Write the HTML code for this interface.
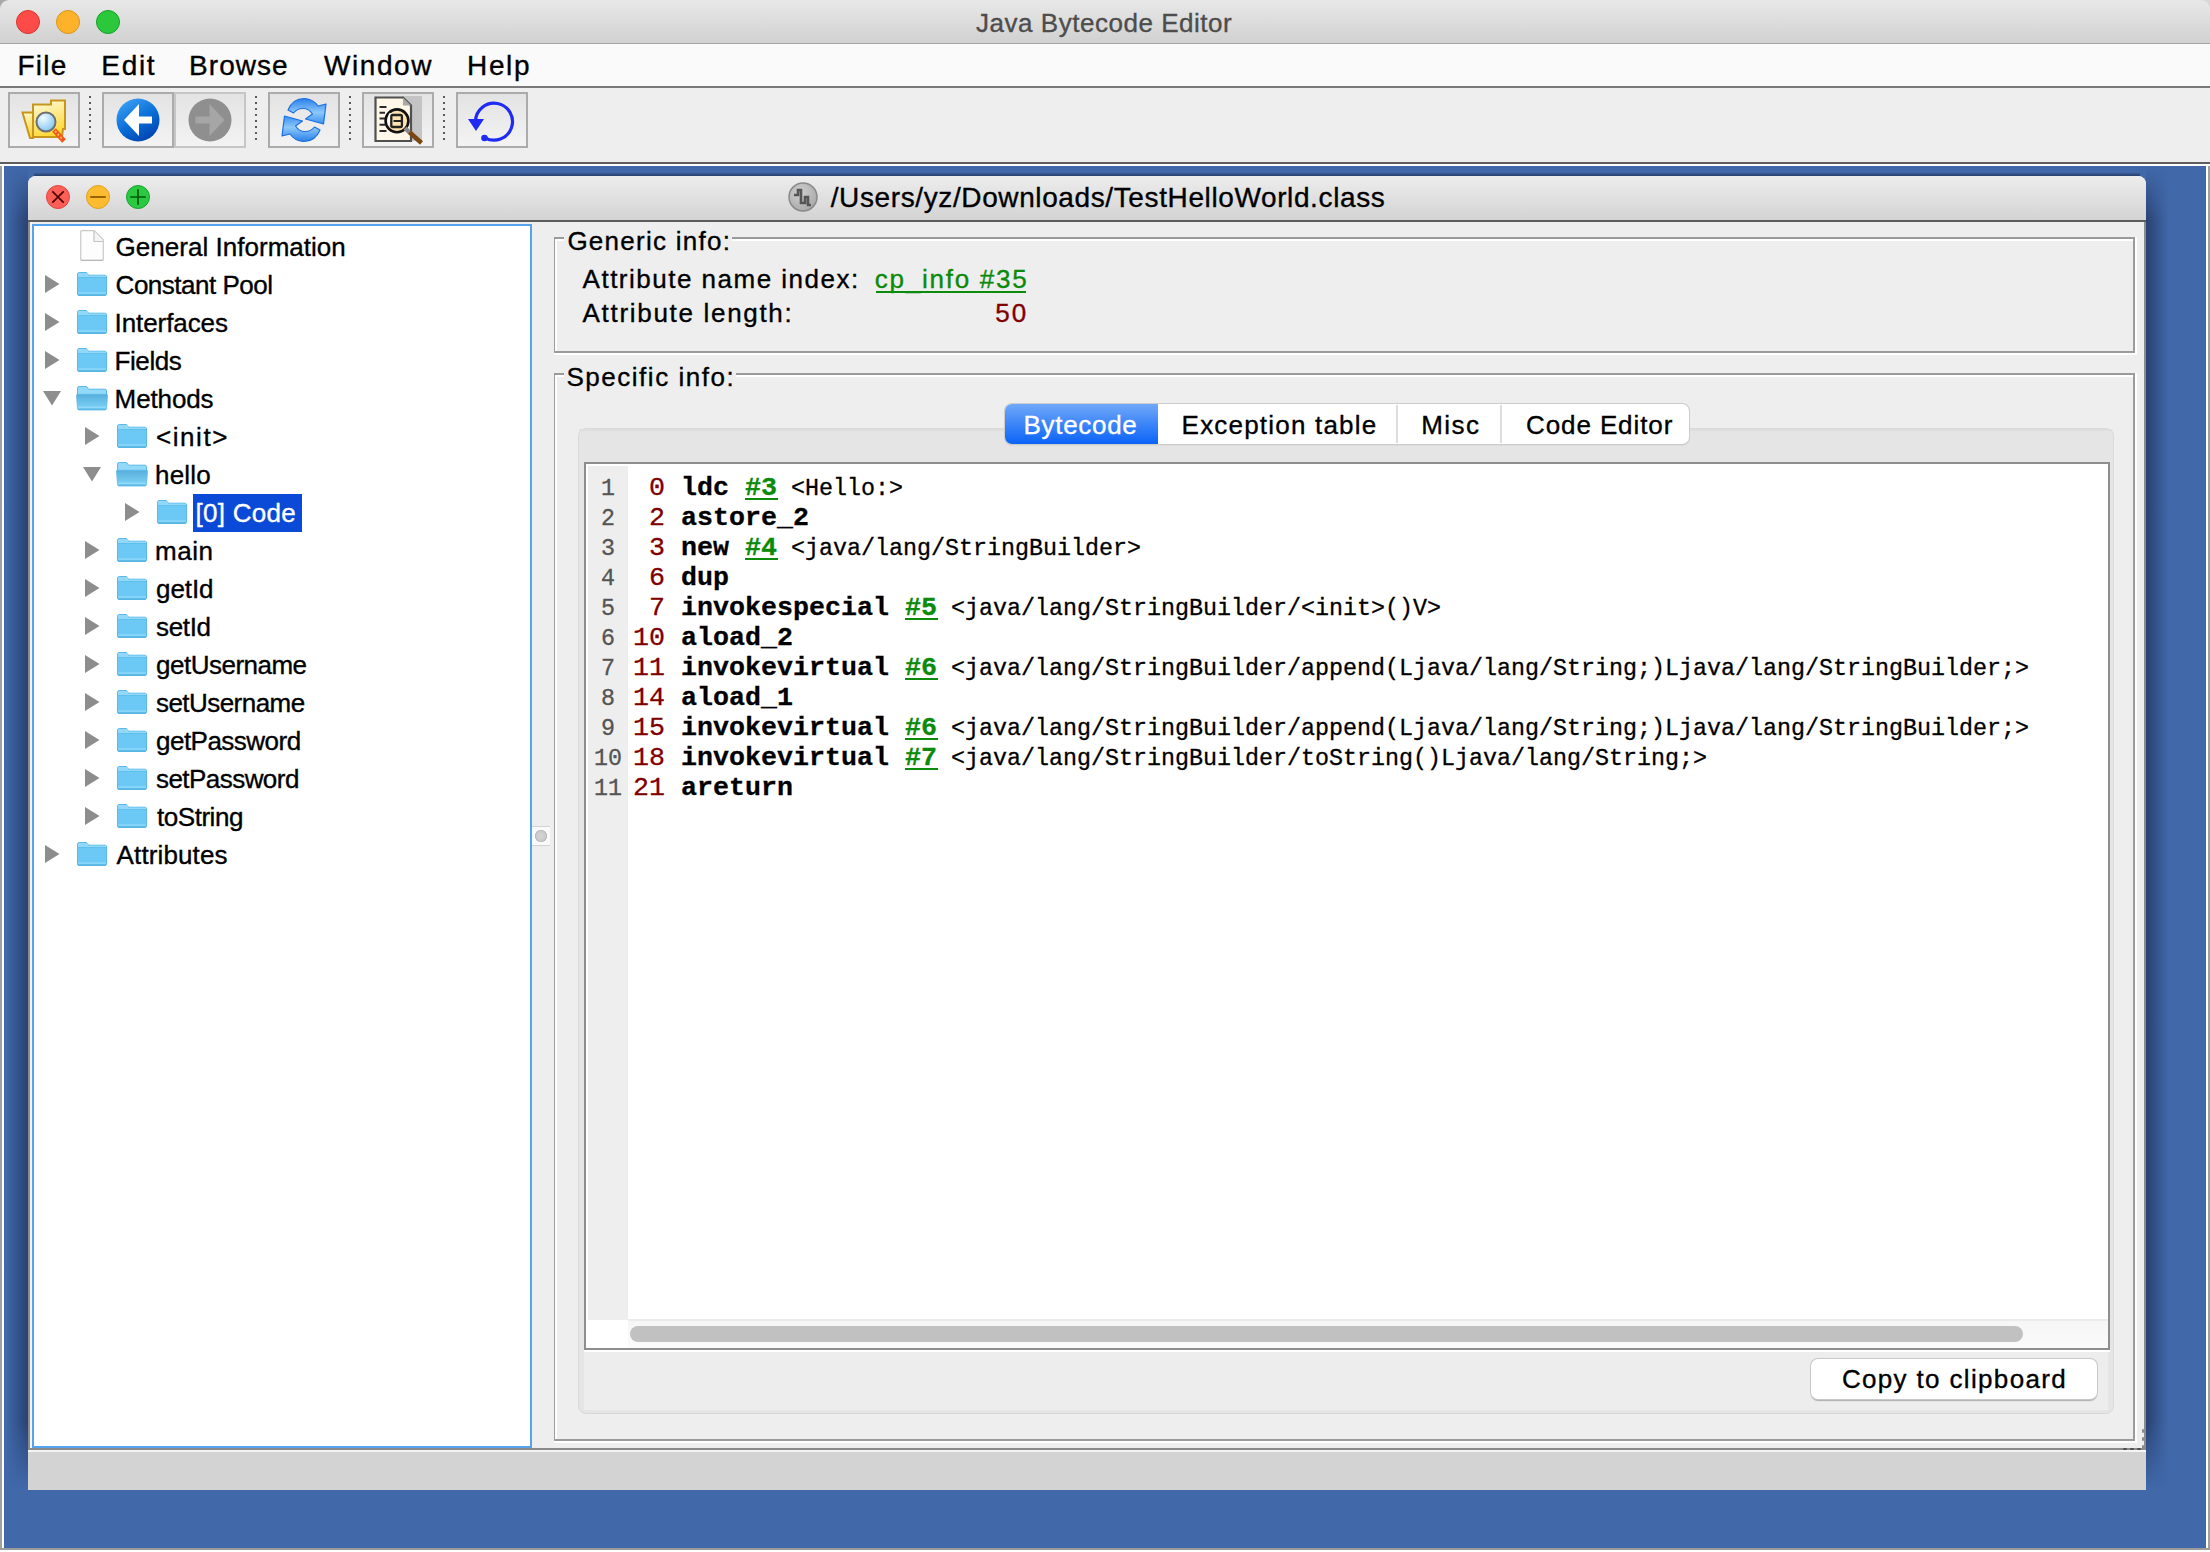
<!DOCTYPE html>
<html><head><meta charset="utf-8"><title>Java Bytecode Editor</title>
<style>
html,body{margin:0;padding:0;width:2210px;height:1552px;overflow:hidden;background:#eeeeee}
.b{position:absolute;box-sizing:border-box}
.t{position:absolute;line-height:1;white-space:pre}
.s{font-family:"Liberation Sans", sans-serif;-webkit-text-stroke:0.35px currentColor}
.m{font-family:"Liberation Mono", monospace;-webkit-text-stroke:0.3px currentColor}
svg{position:absolute;overflow:visible}
</style></head><body>
<div class="b" style="left:0px;top:0px;width:2210px;height:1552px;background:#ececec"></div>
<div class="b" style="left:0px;top:0px;width:10px;height:10px;background:#a9a9a9"></div>
<div class="b" style="left:2200px;top:0px;width:10px;height:10px;background:#d8d8d8"></div>
<div class="b" style="left:0px;top:0px;width:2210px;height:44px;background:linear-gradient(#e8e8e8,#d1d1d1);border-radius:9px 9px 0 0;border-bottom:1px solid #a3a3a3"></div>
<div class="b" style="left:16px;top:10px;width:24px;height:24px;border-radius:50%;background:#fd4b48;border:1px solid #d9352f"></div>
<div class="b" style="left:56px;top:10px;width:24px;height:24px;border-radius:50%;background:#fdb22a;border:1px solid #d9961b"></div>
<div class="b" style="left:96px;top:10px;width:24px;height:24px;border-radius:50%;background:#2ac83a;border:1px solid #17a02a"></div>
<div class="b" style="left:0px;top:44px;width:2210px;height:44px;background:#fafafa;border-bottom:2px solid #787878"></div>
<div class="b" style="left:0px;top:88px;width:2210px;height:74px;background:#eeeeee"></div>
<div class="b" style="left:0px;top:162px;width:2210px;height:2px;background:#5e5e5e"></div>
<div class="b" style="left:0px;top:164px;width:2210px;height:2px;background:#ffffff"></div>
<div class="b" style="left:8px;top:92px;width:72px;height:56px;border:2px solid #ababab;background:linear-gradient(#e3e3e3,#f3f3f3)"></div>
<div class="b" style="left:102px;top:92px;width:72px;height:56px;border:2px solid #ababab;background:linear-gradient(#e3e3e3,#f3f3f3)"></div>
<div class="b" style="left:174px;top:92px;width:72px;height:56px;border:2px solid #c6c6c6;background:linear-gradient(#e3e3e3,#f3f3f3)"></div>
<div class="b" style="left:268px;top:92px;width:72px;height:56px;border:2px solid #ababab;background:linear-gradient(#e3e3e3,#f3f3f3)"></div>
<div class="b" style="left:362px;top:92px;width:72px;height:56px;border:2px solid #ababab;background:linear-gradient(#e3e3e3,#f3f3f3)"></div>
<div class="b" style="left:456px;top:92px;width:72px;height:56px;border:2px solid #ababab;background:linear-gradient(#e3e3e3,#f3f3f3)"></div>
<div class="b" style="left:89px;top:96px;width:2px;height:2px;background:#5a5a5a"></div>
<div class="b" style="left:89px;top:102px;width:2px;height:2px;background:#5a5a5a"></div>
<div class="b" style="left:89px;top:108px;width:2px;height:2px;background:#5a5a5a"></div>
<div class="b" style="left:89px;top:114px;width:2px;height:2px;background:#5a5a5a"></div>
<div class="b" style="left:89px;top:120px;width:2px;height:2px;background:#5a5a5a"></div>
<div class="b" style="left:89px;top:126px;width:2px;height:2px;background:#5a5a5a"></div>
<div class="b" style="left:89px;top:132px;width:2px;height:2px;background:#5a5a5a"></div>
<div class="b" style="left:89px;top:138px;width:2px;height:2px;background:#5a5a5a"></div>
<div class="b" style="left:255px;top:96px;width:2px;height:2px;background:#5a5a5a"></div>
<div class="b" style="left:255px;top:102px;width:2px;height:2px;background:#5a5a5a"></div>
<div class="b" style="left:255px;top:108px;width:2px;height:2px;background:#5a5a5a"></div>
<div class="b" style="left:255px;top:114px;width:2px;height:2px;background:#5a5a5a"></div>
<div class="b" style="left:255px;top:120px;width:2px;height:2px;background:#5a5a5a"></div>
<div class="b" style="left:255px;top:126px;width:2px;height:2px;background:#5a5a5a"></div>
<div class="b" style="left:255px;top:132px;width:2px;height:2px;background:#5a5a5a"></div>
<div class="b" style="left:255px;top:138px;width:2px;height:2px;background:#5a5a5a"></div>
<div class="b" style="left:349px;top:96px;width:2px;height:2px;background:#5a5a5a"></div>
<div class="b" style="left:349px;top:102px;width:2px;height:2px;background:#5a5a5a"></div>
<div class="b" style="left:349px;top:108px;width:2px;height:2px;background:#5a5a5a"></div>
<div class="b" style="left:349px;top:114px;width:2px;height:2px;background:#5a5a5a"></div>
<div class="b" style="left:349px;top:120px;width:2px;height:2px;background:#5a5a5a"></div>
<div class="b" style="left:349px;top:126px;width:2px;height:2px;background:#5a5a5a"></div>
<div class="b" style="left:349px;top:132px;width:2px;height:2px;background:#5a5a5a"></div>
<div class="b" style="left:349px;top:138px;width:2px;height:2px;background:#5a5a5a"></div>
<div class="b" style="left:443px;top:96px;width:2px;height:2px;background:#5a5a5a"></div>
<div class="b" style="left:443px;top:102px;width:2px;height:2px;background:#5a5a5a"></div>
<div class="b" style="left:443px;top:108px;width:2px;height:2px;background:#5a5a5a"></div>
<div class="b" style="left:443px;top:114px;width:2px;height:2px;background:#5a5a5a"></div>
<div class="b" style="left:443px;top:120px;width:2px;height:2px;background:#5a5a5a"></div>
<div class="b" style="left:443px;top:126px;width:2px;height:2px;background:#5a5a5a"></div>
<div class="b" style="left:443px;top:132px;width:2px;height:2px;background:#5a5a5a"></div>
<div class="b" style="left:443px;top:138px;width:2px;height:2px;background:#5a5a5a"></div>
<div class="b" style="left:0px;top:166px;width:2210px;height:1386px;background:#ffffff"></div>
<div class="b" style="left:0px;top:166px;width:2px;height:1384px;background:#a0a0a0"></div>
<div class="b" style="left:2208px;top:166px;width:2px;height:1384px;background:#a0a0a0"></div>
<div class="b" style="left:4px;top:166px;width:2202px;height:1382px;background:#4168a9"></div>
<div class="b" style="left:0px;top:1548px;width:2210px;height:2px;background:#9c9c9c"></div>
<div class="b" style="left:6px;top:168px;width:22px;height:1320px;background:linear-gradient(to right,rgba(30,50,90,0),rgba(25,42,80,.62));-webkit-mask-image:linear-gradient(transparent,#000 4%,#000 95%,transparent)"></div>
<div class="b" style="left:2146px;top:168px;width:22px;height:1320px;background:linear-gradient(to left,rgba(30,50,90,0),rgba(25,42,80,.62));-webkit-mask-image:linear-gradient(transparent,#000 4%,#000 95%,transparent)"></div>
<div class="b" style="left:34px;top:173px;width:2106px;height:3px;background:linear-gradient(rgba(30,45,80,.2),rgba(30,45,80,.7))"></div>
<div class="b" style="left:28px;top:176px;width:2118px;height:1314px;background:#eeeeee;border-radius:8px 8px 0 0"></div>
<div class="b" style="left:28px;top:176px;width:2118px;height:46px;background:linear-gradient(#ededed,#d2d2d2);border-radius:8px 8px 0 0"></div>
<div class="b" style="left:28px;top:220px;width:2118px;height:2px;background:#5c5c5c"></div>
<div class="b" style="left:28px;top:222px;width:2px;height:1228px;background:#8c8c8c"></div>
<div class="b" style="left:2144px;top:222px;width:2px;height:1228px;background:#8c8c8c"></div>
<div class="b" style="left:46px;top:185px;width:24px;height:24px;border-radius:50%;background:#fd5f56;border:1px solid #df463f"></div>
<div class="b" style="left:86px;top:185px;width:24px;height:24px;border-radius:50%;background:#fdbc2f;border:1px solid #dea124"></div>
<div class="b" style="left:126px;top:185px;width:24px;height:24px;border-radius:50%;background:#2ac940;border:1px solid #1aa52d"></div>
<svg style="left:46px;top:185px" width="24" height="24" viewBox="0 0 24 24"><path d="M6.3 6.3L17.7 17.7M17.7 6.3L6.3 17.7" stroke="#4d0000" stroke-width="1.7"/></svg>
<svg style="left:86px;top:185px" width="24" height="24" viewBox="0 0 24 24"><path d="M4.2 12H19.8" stroke="#8a5200" stroke-width="1.7"/></svg>
<svg style="left:126px;top:185px" width="24" height="24" viewBox="0 0 24 24"><path d="M4.2 12H19.8M12 4.2V19.8" stroke="#005a0a" stroke-width="1.7"/></svg>
<svg style="left:788px;top:182px" width="30" height="30" viewBox="0 0 30 30"><defs><radialGradient id="ti" cx="40%" cy="35%" r="70%"><stop offset="0" stop-color="#d0d0d0"/><stop offset="1" stop-color="#a8a8a8"/></radialGradient></defs><circle cx="15" cy="15" r="14" fill="url(#ti)" stroke="#8a8a8a" stroke-width="1.5"/><path d="M6 13h4v-5h3v13h4v-6h3v8h3" fill="none" stroke="#555" stroke-width="2.6"/></svg>
<div class="b" style="left:28px;top:1448px;width:2118px;height:2px;background:#8a8a8a"></div>
<div class="b" style="left:28px;top:1450px;width:2118px;height:2px;background:#f4f4f4"></div>
<div class="b" style="left:28px;top:1452px;width:2118px;height:38px;background:#d3d3d3"></div>
<div class="b" style="left:30px;top:222px;width:2px;height:1226px;background:#f8f4f0"></div>
<div class="b" style="left:32px;top:224px;width:500px;height:1224px;background:#fff;border:2px solid #56a4ee"></div>
<svg style="left:80px;top:230px" width="24" height="31" viewBox="0 0 24 31"><path d="M0.7 1.7Q0.7 0.7 1.7 0.7H14.2L23.3 9.8V29.3Q23.3 30.3 22.3 30.3H1.7Q0.7 30.3 0.7 29.3Z" fill="#fdfdfd" stroke="#c9c9c9" stroke-width="1.2"/><path d="M14 1V11.5H22.8" fill="#f4f4f4" stroke="#c4c4c4" stroke-width="1.2"/><path d="M1 30.3H23" stroke="#b5b5b5" stroke-width="1"/></svg>
<svg style="left:45px;top:275px" width="15" height="18" viewBox="0 0 15 18"><path d="M0 0L14.5 9L0 18Z" fill="#8d8d8d"/></svg>
<svg style="left:77px;top:272px" width="30" height="24" viewBox="0 0 30 24"><path d="M0.5 2.2Q0.5 0.5 2.2 0.5H9.6L11.6 3.2H27.8Q29.5 3.2 29.5 5V22.2Q29.5 23.5 28 23.5H2Q0.5 23.5 0.5 22.2Z" fill="#6cc9f5" stroke="#5ab9e8" stroke-width="1"/><rect x="1" y="1" width="10" height="4" fill="#93d8f8"/><rect x="1" y="3.6" width="28" height="1.6" fill="#93d8f8"/><rect x="1" y="5.2" width="28" height="0.8" fill="#5bbde9"/><rect x="1" y="20.3" width="28" height="1.5" fill="#8ed8f9"/><rect x="1.5" y="22.3" width="27" height="1.2" fill="#58b3e0"/></svg>
<svg style="left:45px;top:313px" width="15" height="18" viewBox="0 0 15 18"><path d="M0 0L14.5 9L0 18Z" fill="#8d8d8d"/></svg>
<svg style="left:77px;top:310px" width="30" height="24" viewBox="0 0 30 24"><path d="M0.5 2.2Q0.5 0.5 2.2 0.5H9.6L11.6 3.2H27.8Q29.5 3.2 29.5 5V22.2Q29.5 23.5 28 23.5H2Q0.5 23.5 0.5 22.2Z" fill="#6cc9f5" stroke="#5ab9e8" stroke-width="1"/><rect x="1" y="1" width="10" height="4" fill="#93d8f8"/><rect x="1" y="3.6" width="28" height="1.6" fill="#93d8f8"/><rect x="1" y="5.2" width="28" height="0.8" fill="#5bbde9"/><rect x="1" y="20.3" width="28" height="1.5" fill="#8ed8f9"/><rect x="1.5" y="22.3" width="27" height="1.2" fill="#58b3e0"/></svg>
<svg style="left:45px;top:351px" width="15" height="18" viewBox="0 0 15 18"><path d="M0 0L14.5 9L0 18Z" fill="#8d8d8d"/></svg>
<svg style="left:77px;top:348px" width="30" height="24" viewBox="0 0 30 24"><path d="M0.5 2.2Q0.5 0.5 2.2 0.5H9.6L11.6 3.2H27.8Q29.5 3.2 29.5 5V22.2Q29.5 23.5 28 23.5H2Q0.5 23.5 0.5 22.2Z" fill="#6cc9f5" stroke="#5ab9e8" stroke-width="1"/><rect x="1" y="1" width="10" height="4" fill="#93d8f8"/><rect x="1" y="3.6" width="28" height="1.6" fill="#93d8f8"/><rect x="1" y="5.2" width="28" height="0.8" fill="#5bbde9"/><rect x="1" y="20.3" width="28" height="1.5" fill="#8ed8f9"/><rect x="1.5" y="22.3" width="27" height="1.2" fill="#58b3e0"/></svg>
<svg style="left:43px;top:391px" width="18" height="15" viewBox="0 0 18 15"><path d="M0 0H18L9 14.5Z" fill="#8d8d8d"/></svg>
<svg style="left:76px;top:386px" width="32" height="25" viewBox="0 0 32 25"><path d="M1.5 2.2Q1.5 0.5 3.2 0.5H10.6L12.6 3.2H28.8Q30.5 3.2 30.5 5V10H1.5Z" fill="#93d9f9" stroke="#5ab9e8" stroke-width="1"/><path d="M0.5 9Q0.5 8.3 1.5 8.3H30.5Q31.5 8.3 31.5 9L30.5 22.5Q30.5 24 29 24H3Q1.5 24 1.5 22.5Z" fill="url(#fo)" stroke="#5ab9e8" stroke-width="0.8"/><defs><linearGradient id="fo" x1="0" y1="0" x2="0" y2="1"><stop offset="0" stop-color="#58afdc"/><stop offset="1" stop-color="#80d5f9"/></linearGradient></defs><rect x="2" y="20.5" width="28" height="1.5" fill="#90d9fa"/><rect x="2.5" y="22.6" width="27" height="1.2" fill="#58b3e0"/></svg>
<svg style="left:85px;top:427px" width="15" height="18" viewBox="0 0 15 18"><path d="M0 0L14.5 9L0 18Z" fill="#8d8d8d"/></svg>
<svg style="left:117px;top:424px" width="30" height="24" viewBox="0 0 30 24"><path d="M0.5 2.2Q0.5 0.5 2.2 0.5H9.6L11.6 3.2H27.8Q29.5 3.2 29.5 5V22.2Q29.5 23.5 28 23.5H2Q0.5 23.5 0.5 22.2Z" fill="#6cc9f5" stroke="#5ab9e8" stroke-width="1"/><rect x="1" y="1" width="10" height="4" fill="#93d8f8"/><rect x="1" y="3.6" width="28" height="1.6" fill="#93d8f8"/><rect x="1" y="5.2" width="28" height="0.8" fill="#5bbde9"/><rect x="1" y="20.3" width="28" height="1.5" fill="#8ed8f9"/><rect x="1.5" y="22.3" width="27" height="1.2" fill="#58b3e0"/></svg>
<svg style="left:83px;top:467px" width="18" height="15" viewBox="0 0 18 15"><path d="M0 0H18L9 14.5Z" fill="#8d8d8d"/></svg>
<svg style="left:116px;top:462px" width="32" height="25" viewBox="0 0 32 25"><path d="M1.5 2.2Q1.5 0.5 3.2 0.5H10.6L12.6 3.2H28.8Q30.5 3.2 30.5 5V10H1.5Z" fill="#93d9f9" stroke="#5ab9e8" stroke-width="1"/><path d="M0.5 9Q0.5 8.3 1.5 8.3H30.5Q31.5 8.3 31.5 9L30.5 22.5Q30.5 24 29 24H3Q1.5 24 1.5 22.5Z" fill="url(#fo)" stroke="#5ab9e8" stroke-width="0.8"/><defs><linearGradient id="fo" x1="0" y1="0" x2="0" y2="1"><stop offset="0" stop-color="#58afdc"/><stop offset="1" stop-color="#80d5f9"/></linearGradient></defs><rect x="2" y="20.5" width="28" height="1.5" fill="#90d9fa"/><rect x="2.5" y="22.6" width="27" height="1.2" fill="#58b3e0"/></svg>
<svg style="left:125px;top:503px" width="15" height="18" viewBox="0 0 15 18"><path d="M0 0L14.5 9L0 18Z" fill="#8d8d8d"/></svg>
<svg style="left:157px;top:500px" width="30" height="24" viewBox="0 0 30 24"><path d="M0.5 2.2Q0.5 0.5 2.2 0.5H9.6L11.6 3.2H27.8Q29.5 3.2 29.5 5V22.2Q29.5 23.5 28 23.5H2Q0.5 23.5 0.5 22.2Z" fill="#6cc9f5" stroke="#5ab9e8" stroke-width="1"/><rect x="1" y="1" width="10" height="4" fill="#93d8f8"/><rect x="1" y="3.6" width="28" height="1.6" fill="#93d8f8"/><rect x="1" y="5.2" width="28" height="0.8" fill="#5bbde9"/><rect x="1" y="20.3" width="28" height="1.5" fill="#8ed8f9"/><rect x="1.5" y="22.3" width="27" height="1.2" fill="#58b3e0"/></svg>
<div class="b" style="left:193px;top:494px;width:109px;height:38px;background:#0b4ad6"></div>
<svg style="left:85px;top:541px" width="15" height="18" viewBox="0 0 15 18"><path d="M0 0L14.5 9L0 18Z" fill="#8d8d8d"/></svg>
<svg style="left:117px;top:538px" width="30" height="24" viewBox="0 0 30 24"><path d="M0.5 2.2Q0.5 0.5 2.2 0.5H9.6L11.6 3.2H27.8Q29.5 3.2 29.5 5V22.2Q29.5 23.5 28 23.5H2Q0.5 23.5 0.5 22.2Z" fill="#6cc9f5" stroke="#5ab9e8" stroke-width="1"/><rect x="1" y="1" width="10" height="4" fill="#93d8f8"/><rect x="1" y="3.6" width="28" height="1.6" fill="#93d8f8"/><rect x="1" y="5.2" width="28" height="0.8" fill="#5bbde9"/><rect x="1" y="20.3" width="28" height="1.5" fill="#8ed8f9"/><rect x="1.5" y="22.3" width="27" height="1.2" fill="#58b3e0"/></svg>
<svg style="left:85px;top:579px" width="15" height="18" viewBox="0 0 15 18"><path d="M0 0L14.5 9L0 18Z" fill="#8d8d8d"/></svg>
<svg style="left:117px;top:576px" width="30" height="24" viewBox="0 0 30 24"><path d="M0.5 2.2Q0.5 0.5 2.2 0.5H9.6L11.6 3.2H27.8Q29.5 3.2 29.5 5V22.2Q29.5 23.5 28 23.5H2Q0.5 23.5 0.5 22.2Z" fill="#6cc9f5" stroke="#5ab9e8" stroke-width="1"/><rect x="1" y="1" width="10" height="4" fill="#93d8f8"/><rect x="1" y="3.6" width="28" height="1.6" fill="#93d8f8"/><rect x="1" y="5.2" width="28" height="0.8" fill="#5bbde9"/><rect x="1" y="20.3" width="28" height="1.5" fill="#8ed8f9"/><rect x="1.5" y="22.3" width="27" height="1.2" fill="#58b3e0"/></svg>
<svg style="left:85px;top:617px" width="15" height="18" viewBox="0 0 15 18"><path d="M0 0L14.5 9L0 18Z" fill="#8d8d8d"/></svg>
<svg style="left:117px;top:614px" width="30" height="24" viewBox="0 0 30 24"><path d="M0.5 2.2Q0.5 0.5 2.2 0.5H9.6L11.6 3.2H27.8Q29.5 3.2 29.5 5V22.2Q29.5 23.5 28 23.5H2Q0.5 23.5 0.5 22.2Z" fill="#6cc9f5" stroke="#5ab9e8" stroke-width="1"/><rect x="1" y="1" width="10" height="4" fill="#93d8f8"/><rect x="1" y="3.6" width="28" height="1.6" fill="#93d8f8"/><rect x="1" y="5.2" width="28" height="0.8" fill="#5bbde9"/><rect x="1" y="20.3" width="28" height="1.5" fill="#8ed8f9"/><rect x="1.5" y="22.3" width="27" height="1.2" fill="#58b3e0"/></svg>
<svg style="left:85px;top:655px" width="15" height="18" viewBox="0 0 15 18"><path d="M0 0L14.5 9L0 18Z" fill="#8d8d8d"/></svg>
<svg style="left:117px;top:652px" width="30" height="24" viewBox="0 0 30 24"><path d="M0.5 2.2Q0.5 0.5 2.2 0.5H9.6L11.6 3.2H27.8Q29.5 3.2 29.5 5V22.2Q29.5 23.5 28 23.5H2Q0.5 23.5 0.5 22.2Z" fill="#6cc9f5" stroke="#5ab9e8" stroke-width="1"/><rect x="1" y="1" width="10" height="4" fill="#93d8f8"/><rect x="1" y="3.6" width="28" height="1.6" fill="#93d8f8"/><rect x="1" y="5.2" width="28" height="0.8" fill="#5bbde9"/><rect x="1" y="20.3" width="28" height="1.5" fill="#8ed8f9"/><rect x="1.5" y="22.3" width="27" height="1.2" fill="#58b3e0"/></svg>
<svg style="left:85px;top:693px" width="15" height="18" viewBox="0 0 15 18"><path d="M0 0L14.5 9L0 18Z" fill="#8d8d8d"/></svg>
<svg style="left:117px;top:690px" width="30" height="24" viewBox="0 0 30 24"><path d="M0.5 2.2Q0.5 0.5 2.2 0.5H9.6L11.6 3.2H27.8Q29.5 3.2 29.5 5V22.2Q29.5 23.5 28 23.5H2Q0.5 23.5 0.5 22.2Z" fill="#6cc9f5" stroke="#5ab9e8" stroke-width="1"/><rect x="1" y="1" width="10" height="4" fill="#93d8f8"/><rect x="1" y="3.6" width="28" height="1.6" fill="#93d8f8"/><rect x="1" y="5.2" width="28" height="0.8" fill="#5bbde9"/><rect x="1" y="20.3" width="28" height="1.5" fill="#8ed8f9"/><rect x="1.5" y="22.3" width="27" height="1.2" fill="#58b3e0"/></svg>
<svg style="left:85px;top:731px" width="15" height="18" viewBox="0 0 15 18"><path d="M0 0L14.5 9L0 18Z" fill="#8d8d8d"/></svg>
<svg style="left:117px;top:728px" width="30" height="24" viewBox="0 0 30 24"><path d="M0.5 2.2Q0.5 0.5 2.2 0.5H9.6L11.6 3.2H27.8Q29.5 3.2 29.5 5V22.2Q29.5 23.5 28 23.5H2Q0.5 23.5 0.5 22.2Z" fill="#6cc9f5" stroke="#5ab9e8" stroke-width="1"/><rect x="1" y="1" width="10" height="4" fill="#93d8f8"/><rect x="1" y="3.6" width="28" height="1.6" fill="#93d8f8"/><rect x="1" y="5.2" width="28" height="0.8" fill="#5bbde9"/><rect x="1" y="20.3" width="28" height="1.5" fill="#8ed8f9"/><rect x="1.5" y="22.3" width="27" height="1.2" fill="#58b3e0"/></svg>
<svg style="left:85px;top:769px" width="15" height="18" viewBox="0 0 15 18"><path d="M0 0L14.5 9L0 18Z" fill="#8d8d8d"/></svg>
<svg style="left:117px;top:766px" width="30" height="24" viewBox="0 0 30 24"><path d="M0.5 2.2Q0.5 0.5 2.2 0.5H9.6L11.6 3.2H27.8Q29.5 3.2 29.5 5V22.2Q29.5 23.5 28 23.5H2Q0.5 23.5 0.5 22.2Z" fill="#6cc9f5" stroke="#5ab9e8" stroke-width="1"/><rect x="1" y="1" width="10" height="4" fill="#93d8f8"/><rect x="1" y="3.6" width="28" height="1.6" fill="#93d8f8"/><rect x="1" y="5.2" width="28" height="0.8" fill="#5bbde9"/><rect x="1" y="20.3" width="28" height="1.5" fill="#8ed8f9"/><rect x="1.5" y="22.3" width="27" height="1.2" fill="#58b3e0"/></svg>
<svg style="left:85px;top:807px" width="15" height="18" viewBox="0 0 15 18"><path d="M0 0L14.5 9L0 18Z" fill="#8d8d8d"/></svg>
<svg style="left:117px;top:804px" width="30" height="24" viewBox="0 0 30 24"><path d="M0.5 2.2Q0.5 0.5 2.2 0.5H9.6L11.6 3.2H27.8Q29.5 3.2 29.5 5V22.2Q29.5 23.5 28 23.5H2Q0.5 23.5 0.5 22.2Z" fill="#6cc9f5" stroke="#5ab9e8" stroke-width="1"/><rect x="1" y="1" width="10" height="4" fill="#93d8f8"/><rect x="1" y="3.6" width="28" height="1.6" fill="#93d8f8"/><rect x="1" y="5.2" width="28" height="0.8" fill="#5bbde9"/><rect x="1" y="20.3" width="28" height="1.5" fill="#8ed8f9"/><rect x="1.5" y="22.3" width="27" height="1.2" fill="#58b3e0"/></svg>
<svg style="left:45px;top:845px" width="15" height="18" viewBox="0 0 15 18"><path d="M0 0L14.5 9L0 18Z" fill="#8d8d8d"/></svg>
<svg style="left:77px;top:842px" width="30" height="24" viewBox="0 0 30 24"><path d="M0.5 2.2Q0.5 0.5 2.2 0.5H9.6L11.6 3.2H27.8Q29.5 3.2 29.5 5V22.2Q29.5 23.5 28 23.5H2Q0.5 23.5 0.5 22.2Z" fill="#6cc9f5" stroke="#5ab9e8" stroke-width="1"/><rect x="1" y="1" width="10" height="4" fill="#93d8f8"/><rect x="1" y="3.6" width="28" height="1.6" fill="#93d8f8"/><rect x="1" y="5.2" width="28" height="0.8" fill="#5bbde9"/><rect x="1" y="20.3" width="28" height="1.5" fill="#8ed8f9"/><rect x="1.5" y="22.3" width="27" height="1.2" fill="#58b3e0"/></svg>
<div class="b" style="left:554px;top:237px;width:1581px;height:116px;border-left:1px solid #9b9b9b;border-top:2px solid #9b9b9b;border-right:2px solid #9b9b9b;border-bottom:2px solid #9b9b9b"></div>
<div class="b" style="left:555px;top:239px;width:1578px;height:112px;border-left:2px solid #fff;border-top:2px solid #fff"></div>
<div class="b" style="left:554px;top:353px;width:1583px;height:2px;background:#fff"></div>
<div class="b" style="left:2135px;top:237px;width:2px;height:118px;background:#fff"></div>
<div class="b" style="left:564px;top:226px;width:168px;height:24px;background:#eeeeee"></div>
<div class="b" style="left:876px;top:291px;width:150px;height:2px;background:#0b8a0b"></div>
<div class="b" style="left:554px;top:373px;width:1581px;height:1068px;border-left:1px solid #9b9b9b;border-top:2px solid #9b9b9b;border-right:2px solid #9b9b9b;border-bottom:2px solid #9b9b9b"></div>
<div class="b" style="left:555px;top:375px;width:1578px;height:1064px;border-left:2px solid #fff;border-top:2px solid #fff"></div>
<div class="b" style="left:554px;top:1441px;width:1583px;height:2px;background:#fff"></div>
<div class="b" style="left:2135px;top:373px;width:2px;height:1070px;background:#fff"></div>
<div class="b" style="left:564px;top:362px;width:172px;height:24px;background:#eeeeee"></div>
<div class="b" style="left:578px;top:428px;width:1536px;height:986px;background:#e5e5e5;border:1px solid #d9d9d9;border-radius:8px"></div>
<div class="b" style="left:579px;top:429px;width:1534px;height:2px;background:#dedede;border-radius:8px 8px 0 0"></div>
<div class="b" style="left:1005px;top:404px;width:684px;height:40px;background:#fff;border-radius:7px;box-shadow:0 0 0 1px #cdcdcd, 0 1px 1.5px #b8b8b8"></div>
<div class="b" style="left:1005px;top:404px;width:153px;height:40px;background:linear-gradient(#70a8f9,#0a63f7);border-radius:7px 0 0 7px"></div>
<div class="b" style="left:1396px;top:405px;width:2px;height:38px;background:#dddddd"></div>
<div class="b" style="left:1500px;top:405px;width:2px;height:38px;background:#dddddd"></div>
<div class="b" style="left:584px;top:462px;width:1524px;height:948px;background:#ededed"></div>
<div class="b" style="left:584px;top:1350px;width:1526px;height:2px;background:#ffffff"></div>
<div class="b" style="left:584px;top:462px;width:1526px;height:888px;background:#fff;border:2px solid #8e8e8e"></div>
<div class="b" style="left:588px;top:466px;width:40px;height:854px;background:#eeeeee"></div>
<div class="b" style="left:628px;top:1319px;width:1480px;height:2px;background:#ececec"></div>
<div class="b" style="left:628px;top:1321px;width:1480px;height:27px;background:linear-gradient(#f6f6f6,#fbfbfb)"></div>
<div class="b" style="left:630px;top:1326px;width:1393px;height:16px;background:#c1c1c1;border-radius:8px"></div>
<div class="b" style="left:1811px;top:1359px;width:286px;height:40px;background:#fff;border-radius:7px;box-shadow:0 0 0 1px #c8c8c8, 0 1.5px 1px #adadad"></div>
<div class="t m" style="left:601.00px;top:477.97px;font-size:23.33px;color:#555555;">1</div>
<div class="t m" style="left:649.00px;top:475.43px;font-size:26.67px;color:#800000;">0</div>
<div class="t m" style="left:681.00px;top:475.43px;font-size:26.67px;font-weight:700;">ldc</div>
<div class="t m" style="left:745.00px;top:475.43px;font-size:26.67px;color:#0b8a0b;font-weight:700;">#3</div>
<div class="b" style="left:745px;top:498px;width:33px;height:2px;background:#0b8a0b"></div>
<div class="t m" style="left:791.00px;top:477.97px;font-size:23.33px;">&lt;Hello:&gt;</div>
<div class="t m" style="left:601.00px;top:507.97px;font-size:23.33px;color:#555555;">2</div>
<div class="t m" style="left:649.00px;top:505.43px;font-size:26.67px;color:#800000;">2</div>
<div class="t m" style="left:681.00px;top:505.43px;font-size:26.67px;font-weight:700;">astore_2</div>
<div class="t m" style="left:601.00px;top:537.97px;font-size:23.33px;color:#555555;">3</div>
<div class="t m" style="left:649.00px;top:535.43px;font-size:26.67px;color:#800000;">3</div>
<div class="t m" style="left:681.00px;top:535.43px;font-size:26.67px;font-weight:700;">new</div>
<div class="t m" style="left:745.00px;top:535.43px;font-size:26.67px;color:#0b8a0b;font-weight:700;">#4</div>
<div class="b" style="left:745px;top:558px;width:33px;height:2px;background:#0b8a0b"></div>
<div class="t m" style="left:791.00px;top:537.97px;font-size:23.33px;">&lt;java/lang/StringBuilder&gt;</div>
<div class="t m" style="left:601.00px;top:567.97px;font-size:23.33px;color:#555555;">4</div>
<div class="t m" style="left:649.00px;top:565.43px;font-size:26.67px;color:#800000;">6</div>
<div class="t m" style="left:681.00px;top:565.43px;font-size:26.67px;font-weight:700;">dup</div>
<div class="t m" style="left:601.00px;top:597.97px;font-size:23.33px;color:#555555;">5</div>
<div class="t m" style="left:649.00px;top:595.43px;font-size:26.67px;color:#800000;">7</div>
<div class="t m" style="left:681.00px;top:595.43px;font-size:26.67px;font-weight:700;">invokespecial</div>
<div class="t m" style="left:905.00px;top:595.43px;font-size:26.67px;color:#0b8a0b;font-weight:700;">#5</div>
<div class="b" style="left:905px;top:618px;width:33px;height:2px;background:#0b8a0b"></div>
<div class="t m" style="left:951.00px;top:597.97px;font-size:23.33px;">&lt;java/lang/StringBuilder/&lt;init&gt;()V&gt;</div>
<div class="t m" style="left:601.00px;top:627.97px;font-size:23.33px;color:#555555;">6</div>
<div class="t m" style="left:633.00px;top:625.43px;font-size:26.67px;color:#800000;">10</div>
<div class="t m" style="left:681.00px;top:625.43px;font-size:26.67px;font-weight:700;">aload_2</div>
<div class="t m" style="left:601.00px;top:657.97px;font-size:23.33px;color:#555555;">7</div>
<div class="t m" style="left:633.00px;top:655.43px;font-size:26.67px;color:#800000;">11</div>
<div class="t m" style="left:681.00px;top:655.43px;font-size:26.67px;font-weight:700;">invokevirtual</div>
<div class="t m" style="left:905.00px;top:655.43px;font-size:26.67px;color:#0b8a0b;font-weight:700;">#6</div>
<div class="b" style="left:905px;top:678px;width:33px;height:2px;background:#0b8a0b"></div>
<div class="t m" style="left:951.00px;top:657.97px;font-size:23.33px;">&lt;java/lang/StringBuilder/append(Ljava/lang/String;)Ljava/lang/StringBuilder;&gt;</div>
<div class="t m" style="left:601.00px;top:687.97px;font-size:23.33px;color:#555555;">8</div>
<div class="t m" style="left:633.00px;top:685.43px;font-size:26.67px;color:#800000;">14</div>
<div class="t m" style="left:681.00px;top:685.43px;font-size:26.67px;font-weight:700;">aload_1</div>
<div class="t m" style="left:601.00px;top:717.97px;font-size:23.33px;color:#555555;">9</div>
<div class="t m" style="left:633.00px;top:715.43px;font-size:26.67px;color:#800000;">15</div>
<div class="t m" style="left:681.00px;top:715.43px;font-size:26.67px;font-weight:700;">invokevirtual</div>
<div class="t m" style="left:905.00px;top:715.43px;font-size:26.67px;color:#0b8a0b;font-weight:700;">#6</div>
<div class="b" style="left:905px;top:738px;width:33px;height:2px;background:#0b8a0b"></div>
<div class="t m" style="left:951.00px;top:717.97px;font-size:23.33px;">&lt;java/lang/StringBuilder/append(Ljava/lang/String;)Ljava/lang/StringBuilder;&gt;</div>
<div class="t m" style="left:594.00px;top:747.97px;font-size:23.33px;color:#555555;">10</div>
<div class="t m" style="left:633.00px;top:745.43px;font-size:26.67px;color:#800000;">18</div>
<div class="t m" style="left:681.00px;top:745.43px;font-size:26.67px;font-weight:700;">invokevirtual</div>
<div class="t m" style="left:905.00px;top:745.43px;font-size:26.67px;color:#0b8a0b;font-weight:700;">#7</div>
<div class="b" style="left:905px;top:768px;width:33px;height:2px;background:#0b8a0b"></div>
<div class="t m" style="left:951.00px;top:747.97px;font-size:23.33px;">&lt;java/lang/StringBuilder/toString()Ljava/lang/String;&gt;</div>
<div class="t m" style="left:594.00px;top:777.97px;font-size:23.33px;color:#555555;">11</div>
<div class="t m" style="left:633.00px;top:775.43px;font-size:26.67px;color:#800000;">21</div>
<div class="t m" style="left:681.00px;top:775.43px;font-size:26.67px;font-weight:700;">areturn</div>
<div class="b" style="left:532px;top:826px;width:18px;height:20px;background:#fafafa;border-top:1px solid #d2d2d2;border-bottom:1px solid #d2d2d2"></div>
<div class="b" style="left:535px;top:830px;width:12px;height:12px;border-radius:50%;background:radial-gradient(#d6d6d6,#c0c0c0);box-shadow:inset 0 0 0 0.6px #b0b0b0"></div>
<div class="b" style="left:2123px;top:1448px;width:4px;height:2px;background:#505050;border-radius:1px"></div>
<div class="b" style="left:2130px;top:1448px;width:4px;height:2px;background:#505050;border-radius:1px"></div>
<div class="b" style="left:2137px;top:1448px;width:4px;height:2px;background:#505050;border-radius:1px"></div>
<div class="b" style="left:2142px;top:1429px;width:2px;height:4px;background:#8a8a8a;border-radius:1px"></div>
<div class="b" style="left:2142px;top:1437px;width:2px;height:4px;background:#8a8a8a;border-radius:1px"></div>
<div class="b" style="left:2142px;top:1445px;width:2px;height:4px;background:#8a8a8a;border-radius:1px"></div>
<svg style="left:18px;top:98px" width="52" height="46" viewBox="0 0 52 46"><defs><linearGradient id="yf" x1="0" y1="0" x2="0.3" y2="1"><stop offset="0" stop-color="#fffbe0"/><stop offset="1" stop-color="#ffd93a"/></linearGradient><radialGradient id="lens" cx="35%" cy="30%" r="75%"><stop offset="0" stop-color="#f4fbff"/><stop offset="1" stop-color="#7cc6f2"/></radialGradient></defs><path d="M4.5 14.5H15V40H12Z" fill="url(#yf)" stroke="#c8961c" stroke-width="2"/><path d="M15 6.5H33V2.5H47V31H45L44 39H15Z" fill="url(#yf)" stroke="#c8961c" stroke-width="2"/><circle cx="28" cy="24" r="9.5" fill="url(#lens)" stroke="#6f6f6f" stroke-width="2"/><path d="M36 32L46 43" stroke="#f0581c" stroke-width="5"/><path d="M37 33L45 42" stroke="#ffb640" stroke-width="2" stroke-dasharray="2 2"/></svg>
<svg style="left:116px;top:98px" width="44" height="44" viewBox="0 0 44 44"><defs><linearGradient id="bb" x1="0.2" y1="0" x2="0.8" y2="1"><stop offset="0" stop-color="#3ea0f5"/><stop offset="0.5" stop-color="#0a6fd8"/><stop offset="1" stop-color="#003fae"/></linearGradient></defs><circle cx="22" cy="22" r="21.5" fill="url(#bb)"/><path d="M8 22L23 6V18.5H36V25.5H23V38Z" fill="#fff"/></svg>
<svg style="left:188px;top:98px" width="44" height="44" viewBox="0 0 44 44"><circle cx="22" cy="22" r="21.5" fill="#8f8f8f"/><path d="M36.5 22L21.5 6V18.5H7.5V25.5H21.5V38Z" fill="#a6a6a6"/></svg>
<svg style="left:281px;top:97px" width="46" height="46" viewBox="0 0 46 46"><defs><linearGradient id="rb" x1="0" y1="0" x2="0" y2="1"><stop offset="0" stop-color="#2a7fe8"/><stop offset="0.55" stop-color="#8cc8fc"/><stop offset="1" stop-color="#3a8ff0"/></linearGradient><linearGradient id="rb2" x1="0" y1="1" x2="0" y2="0"><stop offset="0" stop-color="#2a7fe8"/><stop offset="0.55" stop-color="#8cc8fc"/><stop offset="1" stop-color="#3a8ff0"/></linearGradient></defs><path d="M7 13Q12 1 24 1.5Q32 2 37 9L45 7L42.5 27L24.5 22L31.5 17Q28 11.5 22 11.5Q16 11.5 12.5 16Z" fill="url(#rb)" stroke="#1c6fe0" stroke-width="1.2" stroke-linejoin="round"/><path d="M39 33Q34 45 22 44.5Q14 44 9 37L1 39L3.5 19L21.5 24L14.5 29Q18 34.5 24 34.5Q30 34.5 33.5 30Z" fill="url(#rb2)" stroke="#1c6fe0" stroke-width="1.2" stroke-linejoin="round"/></svg>
<svg style="left:374px;top:96px" width="48" height="48" viewBox="0 0 48 48"><rect x="28" y="0" width="20" height="45" fill="#c4c4c4"/><path d="M1.5 1.5H29L37 9.5V45H1.5Z" fill="#fff8e8" stroke="#505050" stroke-width="2.2"/><path d="M29 1.5V9.5H37Z" fill="#a8a8a8"/><path d="M5.5 11H12.5M5.5 16.7H11M5.5 22.4H11M5.5 28.7H11M5.5 35H12.5" stroke="#2a2a2a" stroke-width="2"/><circle cx="23" cy="24.8" r="11.4" fill="#ffe3b0" stroke="#111" stroke-width="2.6"/><path d="M15.5 29Q13.8 22 17 17.5" fill="none" stroke="#fff" stroke-width="3"/><rect x="17.3" y="19" width="10.6" height="12" rx="1.5" fill="none" stroke="#222" stroke-width="2.3"/><path d="M19.5 25H27.5" stroke="#222" stroke-width="2"/><path d="M31 32L36 37" stroke="#8a8a8a" stroke-width="4.5"/><path d="M35.5 36.3L47.5 47" stroke="#7a4612" stroke-width="4.5"/></svg>
<svg style="left:466px;top:100px" width="50" height="46" viewBox="0 0 50 46"><path d="M9.5 21A18.5 18.5 0 1 1 19 37.8" fill="none" stroke="#1f2af2" stroke-width="3.2"/><path d="M2 19L18 19L10 31Z" fill="#1f2af2"/><circle cx="18.5" cy="38" r="3.3" fill="#1f2af2"/></svg>
<div class="t s" style="left:976.00px;top:9.90px;font-size:26px;color:#4d4d4d;letter-spacing:0.526px;">Java Bytecode Editor</div>
<div class="t s" style="left:17.40px;top:52.20px;font-size:28px;letter-spacing:1.267px;">File</div>
<div class="t s" style="left:101.30px;top:52.20px;font-size:28px;letter-spacing:1.667px;">Edit</div>
<div class="t s" style="left:189.10px;top:52.20px;font-size:28px;letter-spacing:1.020px;">Browse</div>
<div class="t s" style="left:324.00px;top:52.20px;font-size:28px;letter-spacing:1.560px;">Window</div>
<div class="t s" style="left:467.10px;top:52.20px;font-size:28px;letter-spacing:1.600px;">Help</div>
<div class="t s" style="left:830.70px;top:184.20px;font-size:28px;letter-spacing:0.615px;">/Users/yz/Downloads/TestHelloWorld.class</div>
<div class="t s" style="left:115.60px;top:233.90px;font-size:26px;letter-spacing:0.022px;">General Information</div>
<div class="t s" style="left:115.60px;top:271.90px;font-size:26px;letter-spacing:-0.492px;">Constant Pool</div>
<div class="t s" style="left:114.60px;top:309.90px;font-size:26px;letter-spacing:-0.089px;">Interfaces</div>
<div class="t s" style="left:114.60px;top:347.90px;font-size:26px;letter-spacing:-0.440px;">Fields</div>
<div class="t s" style="left:114.60px;top:385.90px;font-size:26px;letter-spacing:-0.117px;">Methods</div>
<div class="t s" style="left:156.00px;top:423.90px;font-size:26px;letter-spacing:1.560px;">&lt;init&gt;</div>
<div class="t s" style="left:155.00px;top:461.90px;font-size:26px;letter-spacing:0.200px;">hello</div>
<div class="t s" style="left:195.50px;top:499.90px;font-size:26px;color:#fff;letter-spacing:0.257px;">[0] Code</div>
<div class="t s" style="left:155.00px;top:537.90px;font-size:26px;letter-spacing:0.567px;">main</div>
<div class="t s" style="left:156.00px;top:575.90px;font-size:26px;letter-spacing:-0.075px;">getId</div>
<div class="t s" style="left:156.00px;top:613.90px;font-size:26px;letter-spacing:-0.350px;">setId</div>
<div class="t s" style="left:156.00px;top:651.90px;font-size:26px;letter-spacing:-0.500px;">getUsername</div>
<div class="t s" style="left:156.00px;top:689.90px;font-size:26px;letter-spacing:-0.550px;">setUsername</div>
<div class="t s" style="left:156.00px;top:727.90px;font-size:26px;letter-spacing:-0.520px;">getPassword</div>
<div class="t s" style="left:156.00px;top:765.90px;font-size:26px;letter-spacing:-0.550px;">setPassword</div>
<div class="t s" style="left:157.00px;top:803.90px;font-size:26px;letter-spacing:-0.457px;">toString</div>
<div class="t s" style="left:116.60px;top:841.90px;font-size:26px;letter-spacing:0.122px;">Attributes</div>
<div class="t s" style="left:567.40px;top:227.90px;font-size:26px;letter-spacing:1.258px;">Generic info:</div>
<div class="t s" style="left:582.60px;top:265.90px;font-size:26px;letter-spacing:1.495px;">Attribute name index:</div>
<div class="t s" style="left:874.80px;top:265.90px;font-size:26px;color:#0b8a0b;letter-spacing:1.750px;">cp_info #35</div>
<div class="t s" style="left:582.60px;top:299.90px;font-size:26px;letter-spacing:1.688px;">Attribute length:</div>
<div class="t s" style="left:995.20px;top:299.90px;font-size:26px;color:#800000;letter-spacing:2.100px;">50</div>
<div class="t s" style="left:566.40px;top:363.90px;font-size:26px;letter-spacing:1.531px;">Specific info:</div>
<div class="t s" style="left:1023.60px;top:411.90px;font-size:26px;color:#fff;letter-spacing:0.686px;">Bytecode</div>
<div class="t s" style="left:1181.60px;top:411.90px;font-size:26px;letter-spacing:1.200px;">Exception table</div>
<div class="t s" style="left:1421.30px;top:411.90px;font-size:26px;letter-spacing:1.400px;">Misc</div>
<div class="t s" style="left:1526.00px;top:411.90px;font-size:26px;letter-spacing:0.900px;">Code Editor</div>
<div class="t s" style="left:1841.90px;top:1365.90px;font-size:26px;letter-spacing:1.344px;">Copy to clipboard</div>

</body></html>
